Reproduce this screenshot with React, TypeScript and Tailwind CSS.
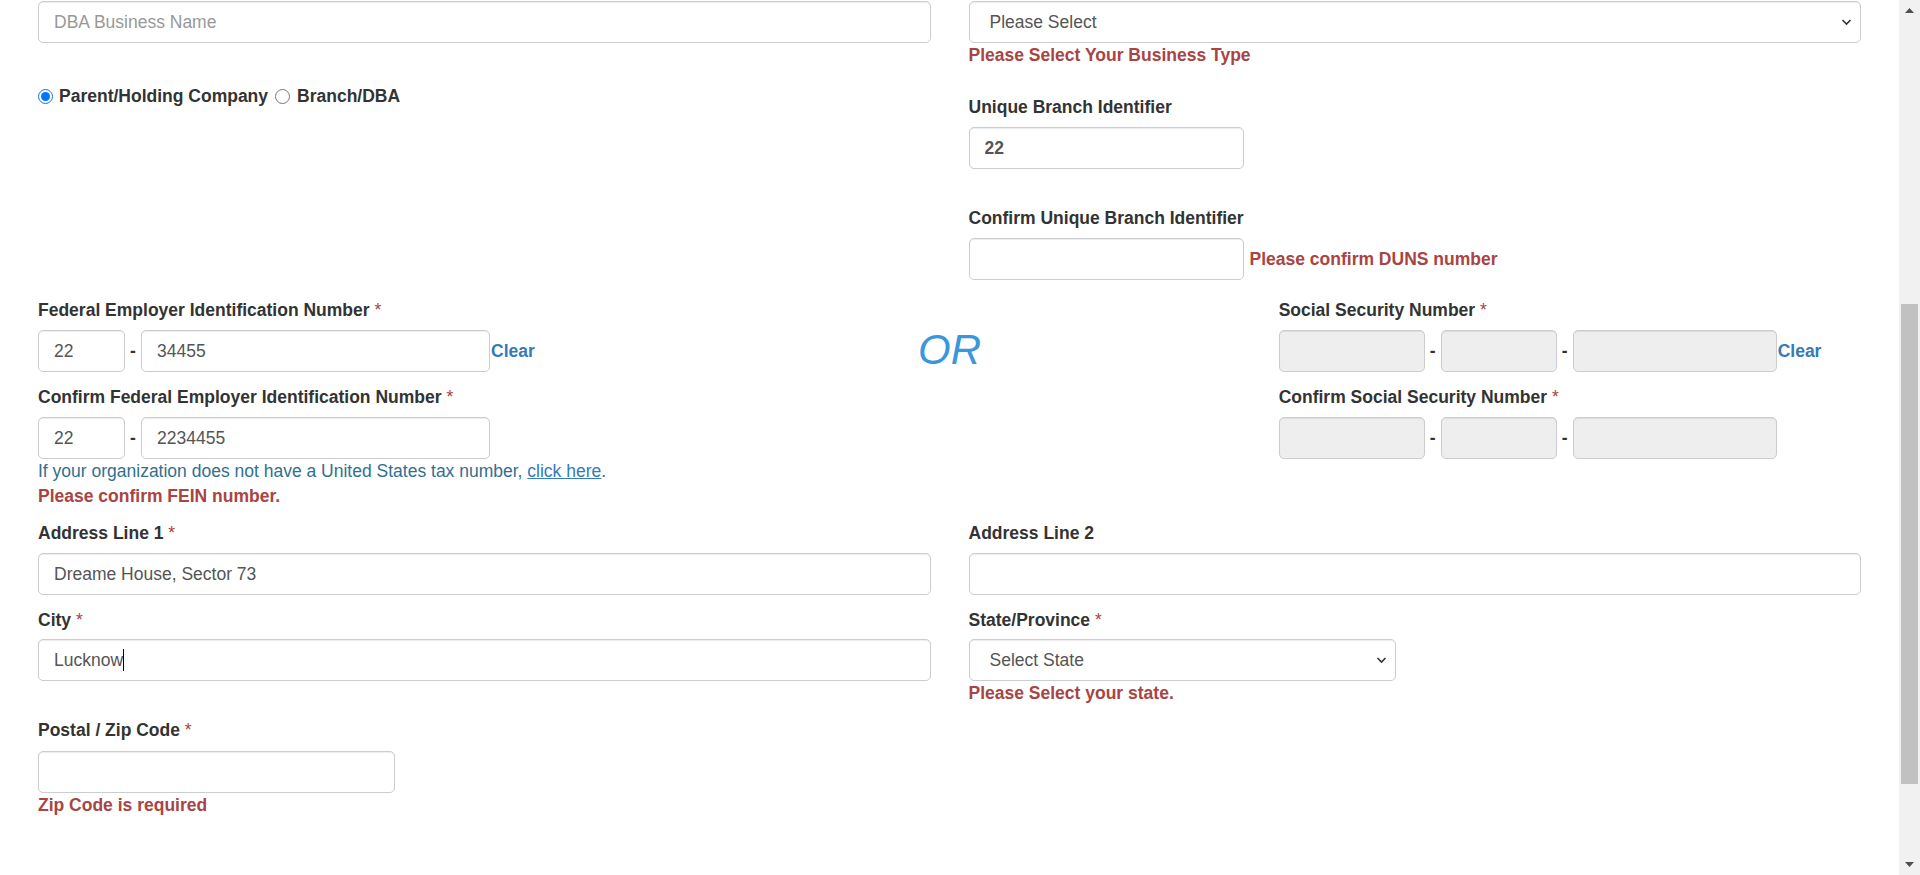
import React from "react";

const inputCls =
  "h-[42px] rounded-[5px] border border-[#ccc] bg-white px-[15px] text-[17.5px] text-[#555] shadow-[inset_0_1px_1px_rgba(0,0,0,0.075)] outline-none";
const disabledCls =
  "h-[42px] rounded-[5px] border border-[#ccc] bg-[#eee] shadow-[inset_0_1px_1px_rgba(0,0,0,0.075)] outline-none";

const Label: React.FC<{ children: React.ReactNode; required?: boolean }> = ({
  children,
  required,
}) => (
  <label className="block font-bold leading-[25px] text-[#333]">
    {children}
    {required && <span className="font-normal text-[#a94442]"> *</span>}
  </label>
);

const ErrorText: React.FC<{ children: React.ReactNode }> = ({ children }) => (
  <p className="font-bold leading-[25px] text-[#a94442]">{children}</p>
);

const Chevron = () => (
  <svg
    width="11"
    height="7"
    viewBox="0 0 11 7"
    className="pointer-events-none absolute right-[9px] top-1/2 -translate-y-1/2"
  >
    <path d="M1.5 1.5l4 4 4-4" fill="none" stroke="#333" strokeWidth="1.6" />
  </svg>
);

const FakeSelect: React.FC<{ text: string; width: string }> = ({ text, width }) => (
  <div className={`relative ${width}`}>
    <select
      defaultValue=""
      className={`${inputCls} w-full appearance-none pl-[20px]`}
    >
      <option value="">{text}</option>
    </select>
    <Chevron />
  </div>
);

const Dash = () => (
  <span className="w-[16px] text-center font-bold text-[#333]">-</span>
);

const ClearLink = () => (
  <a className="ml-[1px] font-bold text-[#337ab7]" href="#">
    Clear
  </a>
);

const FeinInputs: React.FC<{ a: string; b: string; clear?: boolean }> = ({
  a,
  b,
  clear,
}) => (
  <div className="flex items-center">
    <input defaultValue={a} className={`${inputCls} w-[87px]`} />
    <Dash />
    <input defaultValue={b} className={`${inputCls} w-[349px]`} />
    {clear && <ClearLink />}
  </div>
);

const SsnInputs: React.FC<{ clear?: boolean }> = ({ clear }) => (
  <div className="flex items-center">
    <input disabled className={`${disabledCls} w-[146px]`} />
    <Dash />
    <input disabled className={`${disabledCls} w-[116px]`} />
    <Dash />
    <input disabled className={`${disabledCls} w-[204px]`} />
    {clear && <ClearLink />}
  </div>
);

const Scrollbar = () => (
  <aside className="flex w-[21px] shrink-0 flex-col items-center bg-[#f1f1f1]">
    <div className="flex h-[21px] w-full items-center justify-center">
      <svg width="9" height="5" viewBox="0 0 9 5">
        <polygon points="0,5 4.5,0 9,5" fill="#505050" />
      </svg>
    </div>
    <div className="mt-[283px] h-[480px] w-[17px] bg-[#c1c1c1]" />
    <div className="flex-1" />
    <div className="flex h-[21px] w-full items-center justify-center">
      <svg width="9" height="5" viewBox="0 0 9 5">
        <polygon points="0,0 4.5,5 9,0" fill="#505050" />
      </svg>
    </div>
  </aside>
);

export default function App() {
  return (
    <div className="flex h-screen overflow-hidden bg-white font-['Liberation_Sans',Arial,sans-serif] text-[17.5px] leading-[25px] text-[#333]">
      <main className="flex-1 px-[38px] pt-px">
        {/* business name / type */}
        <div className="grid grid-cols-2 gap-x-[38px]">
          <div>
            <input
              placeholder="DBA Business Name"
              className={`${inputCls} w-full placeholder:text-[#999]`}
            />
            <div className="mt-[41px] flex items-center font-bold">
              <input
                type="radio"
                name="orgType"
                defaultChecked
                className="m-0 h-[15px] w-[15px] accent-[#0075ff]"
              />
              <span className="ml-[6px]">Parent/Holding Company</span>
              <input
                type="radio"
                name="orgType"
                className="m-0 ml-[7px] h-[15px] w-[15px]"
              />
              <span className="ml-[7px]">Branch/DBA</span>
            </div>
          </div>
          <div>
            <FakeSelect text="Please Select" width="w-full" />
            <ErrorText>Please Select Your Business Type</ErrorText>
            <div className="mt-[27px]">
              <Label>Unique Branch Identifier</Label>
              <input
                defaultValue="22"
                className={`${inputCls} mt-[7px] w-[275px] font-bold`}
              />
            </div>
            <div className="mt-[37px]">
              <Label>Confirm Unique Branch Identifier</Label>
              <div className="mt-[7px] flex items-center gap-[6px]">
                <input className={`${inputCls} w-[275px]`} />
                <span className="font-bold text-[#a94442]">
                  Please confirm DUNS number
                </span>
              </div>
            </div>
          </div>
        </div>

        {/* FEIN / SSN */}
        <div className="mt-[18px] grid grid-cols-3 gap-x-[38px]">
          <div>
            <Label required>Federal Employer Identification Number</Label>
            <div className="mt-[7px]">
              <FeinInputs a="22" b="34455" clear />
            </div>
            <div className="mt-[13px]">
              <Label required>Confirm Federal Employer Identification Number</Label>
              <div className="mt-[7px]">
                <FeinInputs a="22" b="2234455" />
              </div>
            </div>
            <p className="whitespace-nowrap text-[#31708f]">
              If your organization does not have a United States tax number,{" "}
              <a href="#" className="text-[#337ab7] underline">
                click here
              </a>
              .
            </p>
            <ErrorText>Please confirm FEIN number.</ErrorText>
          </div>
          <div className="pt-[31px] text-center">
            <span className="text-[42px] italic leading-[42px] text-[#3a96dd]">OR</span>
          </div>
          <div>
            <Label required>Social Security Number</Label>
            <div className="mt-[7px]">
              <SsnInputs clear />
            </div>
            <div className="mt-[13px]">
              <Label required>Confirm Social Security Number</Label>
              <div className="mt-[7px]">
                <SsnInputs />
              </div>
            </div>
          </div>
        </div>

        {/* address */}
        <div className="mt-[12px] grid grid-cols-2 gap-x-[38px]">
          <div>
            <Label required>Address Line 1</Label>
            <input
              defaultValue="Dreame House, Sector 73"
              className={`${inputCls} mt-[7px] w-full`}
            />
            <div className="mt-[13px]">
              <Label required>City</Label>
              <div className="relative mt-[6px]">
                <input
                  defaultValue="Lucknow"
                  className={`${inputCls} w-full border-[#66afe9] shadow-[inset_0_1px_1px_rgba(0,0,0,0.075),0_0_8px_rgba(102,175,233,0.6)]`}
                />
                <span className="absolute left-[85px] top-[10px] h-[22px] w-px bg-black" />
              </div>
            </div>
          </div>
          <div>
            <Label>Address Line 2</Label>
            <input className={`${inputCls} mt-[7px] w-full`} />
            <div className="mt-[13px]">
              <Label required>State/Province</Label>
              <div className="mt-[6px]">
                <FakeSelect text="Select State" width="w-[427px]" />
              </div>
              <ErrorText>Please Select your state.</ErrorText>
            </div>
          </div>
        </div>

        <div className="mt-[12px]">
          <Label required>Postal / Zip Code</Label>
          <input className={`${inputCls} mt-[8px] w-[357px]`} />
          <ErrorText>Zip Code is required</ErrorText>
        </div>
      </main>
      <Scrollbar />
    </div>
  );
}
